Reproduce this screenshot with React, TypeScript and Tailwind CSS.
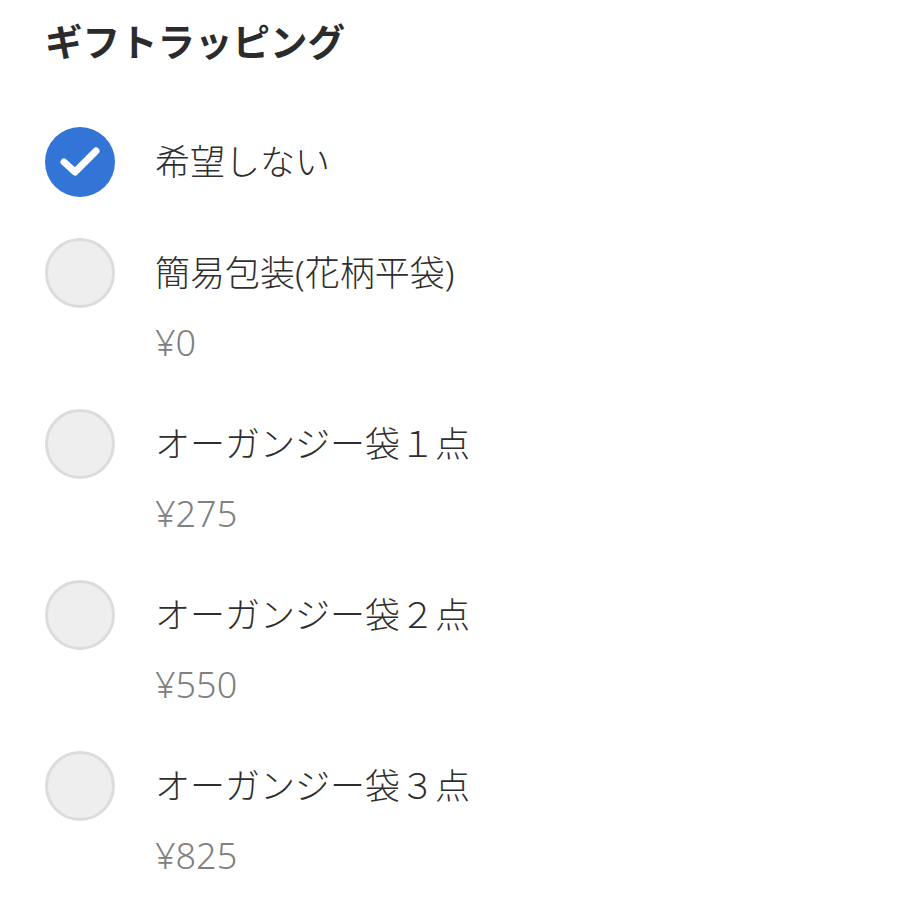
const options = [
  { label: "希望しない", price: null },
  { label: "簡易包装(花柄平袋)", price: "¥0" },
  { label: "オーガンジー袋１点", price: "¥275" },
  { label: "オーガンジー袋２点", price: "¥550" },
  { label: "オーガンジー袋３点", price: "¥825" },
];

export default function App() {
  const selected = 0;

  return (
    <div
      className="min-h-screen bg-white px-[45px] pt-[17px] text-[#333333]"
      style={{ fontFamily: '"Noto Sans", "Noto Sans CJK JP", sans-serif' }}
    >
      <h2 className="text-[37.5px] font-bold leading-[50px] text-[#2b2b2b]">
        ギフトラッピング
      </h2>

      <div className="mt-[60px] flex flex-col gap-[41px]">
        {options.map((opt, i) => (
          <div key={i} className="flex items-start gap-[40px]">
            {i === selected ? (
              <div className="h-[70px] w-[70px] shrink-0 rounded-full bg-[#3275d6]">
                <svg viewBox="0 0 70 70" className="h-full w-full">
                  <polyline
                    points="19,35 30,45 51,24"
                    fill="none"
                    stroke="white"
                    strokeWidth="7"
                    strokeLinecap="round"
                    strokeLinejoin="round"
                  />
                </svg>
              </div>
            ) : (
              <div className="h-[70px] w-[70px] shrink-0 rounded-full border-[3px] border-[#dcdcdc] bg-[#eeeeee]" />
            )}
            <div className="flex flex-col">
              <div className="text-[35px] font-light leading-[70px] text-[#2e2e2e]">{opt.label}</div>
              {opt.price && (
                <div className="mt-[10px] text-[36px] font-light leading-[50px] text-[#808080]">
                  {opt.price}
                </div>
              )}
            </div>
          </div>
        ))}
      </div>
    </div>
  );
}
